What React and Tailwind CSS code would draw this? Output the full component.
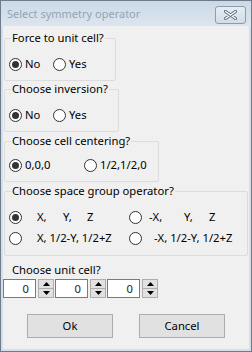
import { useState } from "react";

function Radio({ checked, onClick, label, className = "" }) {
  return (
    <div className={`flex items-center h-[16px] cursor-default ${className}`} onClick={onClick}>
      <span className="w-[13px] h-[13px] rounded-full border border-[#333333] bg-white flex items-center justify-center shrink-0">
        {checked && <span className="w-[7px] h-[7px] rounded-full bg-[#333333]" />}
      </span>
      {label}
    </div>
  );
}

function Group({ title, className = "", children }) {
  return (
    <fieldset className={`ml-[1px] border border-[#dcdcdc] rounded-[2px] ${className}`}>
      <legend className="ml-[2px] px-[1px] leading-[16px] whitespace-nowrap text-black">{title}</legend>
      {children}
    </fieldset>
  );
}

function Spinner({ value }) {
  return (
    <div className="flex h-[19px]">
      <div className="w-[33px] h-[19px] border border-[#7a7a7a] bg-white text-right pr-[6px] leading-[17px] text-[#1e1e1e]">
        {value}
      </div>
      <div className="ml-[2px] w-[16px] h-[19px] flex flex-col">
        <div className="h-[10px] border border-[#adadad] bg-[#e1e1e1] flex items-center justify-center">
          <svg width="7" height="4" viewBox="0 0 7 4"><path d="M0 4 L3.5 0 L7 4 Z" fill="#000" /></svg>
        </div>
        <div className="h-[9px] border border-t-0 border-[#adadad] bg-[#e1e1e1] flex items-center justify-center">
          <svg width="7" height="4" viewBox="0 0 7 4"><path d="M0 0 L3.5 4 L7 0 Z" fill="#000" /></svg>
        </div>
      </div>
    </div>
  );
}

export default function App() {
  const [force, setForce] = useState(0);
  const [inv, setInv] = useState(0);
  const [center, setCenter] = useState(0);
  const [op, setOp] = useState(0);

  return (
    <div className="w-[252px] h-[352px] border border-[#6f7b88] bg-[#d3dfeb] flex flex-col font-['Noto_Sans',sans-serif] text-[11.25px] text-black select-none">
      <div className="h-[25px] shrink-0 flex items-center justify-between pl-[6px] pr-[5px] bg-gradient-to-b from-[#cbd9e7] to-[#dbe5ef]">
        <span className="text-[#95a4b4] text-[11px] leading-[16px] mt-[1px]">Select symmetry operator</span>
        <div className="w-[31px] h-[18px] mt-[3px] rounded-[3px] border border-[#8d9cad] bg-gradient-to-b from-[#e6edf4] to-[#d2dde8] flex items-center justify-center">
          <svg width="13" height="10" viewBox="0 0 13 10">
            <path d="M1.5 1.5 L11.5 8.5 M11.5 1.5 L1.5 8.5" stroke="#5f6b78" strokeWidth="3.2" strokeLinecap="round" />
            <path d="M1.5 1.5 L11.5 8.5 M11.5 1.5 L1.5 8.5" stroke="#ffffff" strokeWidth="1.4" strokeLinecap="round" />
          </svg>
        </div>
      </div>

      <div className="flex-1 mx-[2px] mb-[2px] bg-[#f0f0f0] flex flex-col pt-[4px] pr-[1px]">
        <Group title="Force to unit cell?" className="w-[112px] pt-[10px] pb-[8px] pl-[4px]">
          <div className="flex">
            <Radio checked={force === 0} onClick={() => setForce(0)} className="w-[44px]" label={<span className="ml-[3px]">No</span>} />
            <Radio checked={force === 1} onClick={() => setForce(1)} label={<span className="ml-[3px]">Yes</span>} />
          </div>
        </Group>

        <Group title="Choose inversion?" className="w-[115px] pt-[10px] pb-[8px] pl-[4px]">
          <div className="flex">
            <Radio checked={inv === 0} onClick={() => setInv(0)} className="w-[44px]" label={<span className="ml-[3px]">No</span>} />
            <Radio checked={inv === 1} onClick={() => setInv(1)} label={<span className="ml-[3px]">Yes</span>} />
          </div>
        </Group>

        <Group title="Choose cell centering?" className="mt-[1px] w-[155px] pt-[8px] pb-[8px] pl-[4px]">
          <div className="flex">
            <Radio checked={center === 0} onClick={() => setCenter(0)} className="w-[75px]" label={<span className="ml-[3px]">0,0,0</span>} />
            <Radio checked={center === 1} onClick={() => setCenter(1)} label={<span className="ml-[3px]">1/2,1/2,0</span>} />
          </div>
        </Group>

        <Group title="Choose space group operator?" className="mt-[1px] w-[244px] pt-[10px] pb-[9px] pl-[4px]">
          <div className="flex flex-col gap-[5px]">
            <div className="flex">
              <Radio
                checked={op === 0}
                onClick={() => setOp(0)}
                className="w-[120px]"
                label={
                  <span className="flex ml-[15px]">
                    <span className="w-[26px]">X,</span>
                    <span className="w-[24px]">Y,</span>
                    <span>Z</span>
                  </span>
                }
              />
              <Radio
                checked={op === 1}
                onClick={() => setOp(1)}
                label={
                  <span className="flex ml-[7px]">
                    <span className="w-[35px]">-X,</span>
                    <span className="w-[25px]">Y,</span>
                    <span>Z</span>
                  </span>
                }
              />
            </div>
            <div className="flex">
              <Radio checked={op === 2} onClick={() => setOp(2)} className="w-[120px]" label={<span className="ml-[15px]">X, 1/2-Y, 1/2+Z</span>} />
              <Radio checked={op === 3} onClick={() => setOp(3)} label={<span className="ml-[12px]">-X, 1/2-Y, 1/2+Z</span>} />
            </div>
          </div>
        </Group>

        <div className="mt-[6px] ml-[9px] leading-[16px]">Choose unit cell?</div>
        <div className="mt-[1px] flex gap-[1px]">
          <Spinner value="0" />
          <Spinner value="0" />
          <Spinner value="0" />
        </div>

        <div className="mt-[16px] flex pl-[24px] gap-[26px]">
          <button className="w-[86px] h-[24px] border border-[#adadad] bg-[#e1e1e1] text-black leading-[20px]">Ok</button>
          <button className="w-[86px] h-[24px] border border-[#adadad] bg-[#e1e1e1] text-black leading-[20px]">Cancel</button>
        </div>
      </div>
    </div>
  );
}
